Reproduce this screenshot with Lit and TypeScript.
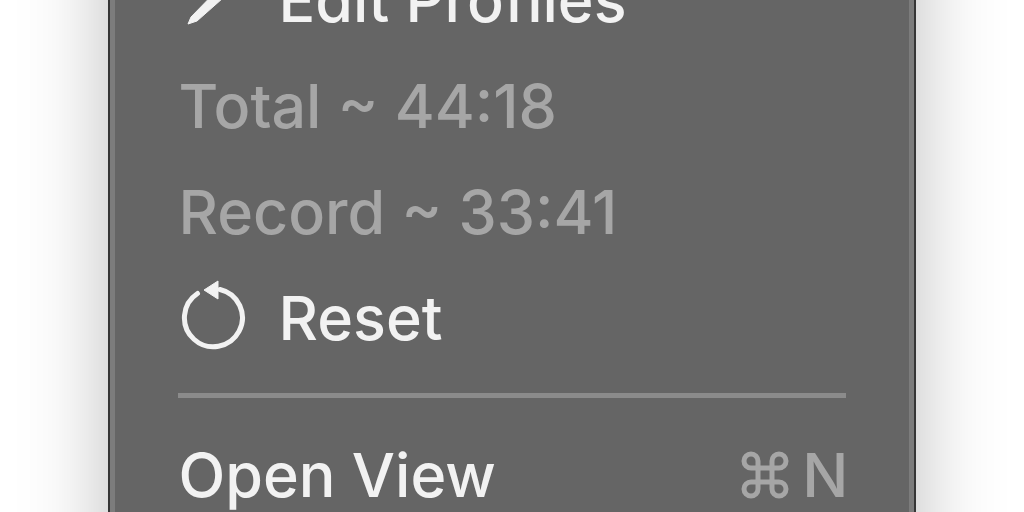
import { LitElement, html, css } from "lit";
import { customElement } from "lit/decorators.js";

@customElement("app-root")
export class AppRoot extends LitElement {
  static styles = css`
    :host {
      display: flex;
      justify-content: center;
      align-items: flex-start;
      height: 100vh;
      overflow: hidden;
      background: #fff;
      font-family: Inter, "Liberation Sans", sans-serif;
      font-size: 61px;
      font-weight: 500;
    }
    .menu {
      box-sizing: border-box;
      width: 79%;
      flex-shrink: 0;
      margin-top: -160px;
      padding: 105px 60px 80px 62px;
      background: #656565;
      border: 2px solid #363636;
      box-shadow: inset 0 0 0 5px #7c7c7c, 0 0 80px rgba(0, 0, 0, 0.26);
    }
    .item {
      box-sizing: border-box;
      display: flex;
      align-items: center;
      width: 100%;
      height: 106px;
      margin: 0;
      padding: 0 6px 0 7px;
      border: 0;
      background: none;
      font: inherit;
      line-height: 72px;
      color: #f2f2f2;
      text-align: left;
      white-space: nowrap;
    }
    .info { color: #a6a6a6; }
    .icon {
      flex: none;
      width: 68px;
      height: 80px;
      margin-right: 32px;
    }
    .line { fill: none; stroke: #f2f2f2; stroke-width: 5; stroke-linecap: round; }
    .solid { fill: #f2f2f2; stroke: #f2f2f2; stroke-width: 1; stroke-linejoin: round; }
    .rule {
      border: 0;
      height: 5px;
      margin: 22px 8px 24px 6px;
      background: #8b8b8b;
    }
    .key {
      display: flex;
      align-items: center;
      gap: 13px;
      margin-left: auto;
      color: #a6a6a6;
    }
    .command { width: 48px; height: 48px; fill: none; stroke: #a6a6a6; stroke-width: 5; }
  `;

  render() {
    return html`<nav class="menu">
      <button class="item">
        <svg class="icon" viewBox="0 0 68 80" aria-hidden="true">
          <path class="solid" d="M9 64L12 57L53 15L61 23L18 61Z" />
        </svg>Edit Profiles
      </button>
      <div class="item info">Total ~ 44:18</div>
      <div class="item info">Record ~ 33:41</div>
      <button class="item">
        <svg class="icon" viewBox="0 0 68 80" aria-hidden="true">
          <path class="line" d="M18.500 15.500A29 29 0 1 0 41 11.500" />
          <path class="solid" d="M25 12L39 3V21Z" />
        </svg>Reset
      </button>
      <hr class="rule" />
      <button class="item">
        Open View
        <span class="key">
          <svg class="command" viewBox="0 0 48 48" role="img" aria-label="Command">
            <path d="M17 17H10A7 7 0 1 1 17 10V38A7 7 0 1 1 10 31H38A7 7 0 1 1 31 38V10A7 7 0 1 1 38 17Z" />
          </svg>N
        </span>
      </button>
    </nav>`;
  }
}
